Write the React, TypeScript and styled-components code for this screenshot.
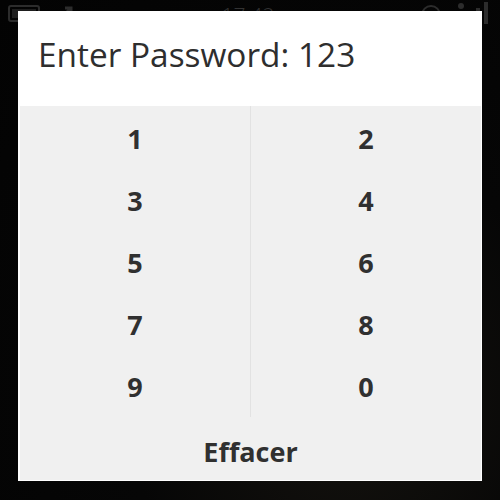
import styled, { createGlobalStyle } from "styled-components";

const GlobalStyle = createGlobalStyle`
  html, body {
    margin: 0;
    padding: 0;
    background: #040404;
  }
  body {
    font-family: "Open Sans", "Liberation Sans", sans-serif;
  }
`;

const Screen = styled.div`
  position: relative;
  width: 500px;
  height: 500px;
  overflow: hidden;
  background: radial-gradient(ellipse at 70% 80%, #15130f 0%, #060606 45%, #030303 100%);
`;

const StatusBar = styled.div`
  height: 26px;
  display: flex;
  align-items: center;
  justify-content: space-between;
  padding: 0 8px;
`;

const Clock = styled.span`
  font-weight: 300;
  font-size: 21px;
  line-height: 1;
  color: #333333;
  margin-top: 4px;
`;

const IconGroup = styled.div`
  display: flex;
  align-items: center;
  gap: 14px;
`;

const Dialog = styled.div`
  position: absolute;
  top: 11px;
  left: 18px;
  width: 464px;
  height: 470px;
  background: #ffffff;
  display: flex;
  flex-direction: column;
`;

const Header = styled.div`
  height: 95px;
  box-sizing: border-box;
  display: flex;
  align-items: center;
  padding: 0 20px 9px;
  font-size: 33.4px;
  color: #2e2e2e;
`;

const Pad = styled.div`
  flex: 1;
  margin: 0 1px 1px 2px;
  background: #f0f0f0;
  display: flex;
  flex-direction: column;
`;

const Keys = styled.div`
  display: grid;
  grid-template-columns: 1fr 1px 1fr;
  padding-top: 1px;
`;

const Column = styled.div`
  display: flex;
  flex-direction: column;
`;

const Divider = styled.div`
  background: #e2e2e2;
  margin-top: -1px;
`;

const Key = styled.div`
  height: 62px;
  display: flex;
  align-items: center;
  justify-content: center;
  font-size: 27px;
  font-weight: 700;
  color: #303030;
`;

const Clear = styled(Key)`
  flex: 1;
  height: auto;
  padding-top: 6px;
`;

const left = ["1", "3", "5", "7", "9"];
const right = ["2", "4", "6", "8", "0"];

export default function App() {
  return (
    <Screen>
      <GlobalStyle />
      <StatusBar>
        <IconGroup>
          <svg width="34" height="20" viewBox="0 0 34 20">
            <rect x="1" y="3" width="30" height="15" rx="2" fill="none" stroke="#2c2c2c" strokeWidth="2" />
            <rect x="4" y="6" width="24" height="9" fill="#1e1e1e" />
          </svg>
          <svg width="20" height="20" viewBox="0 0 20 20">
            <path d="M4 16 L14 6 M9 5 L15 5 L15 11" fill="none" stroke="#2c2c2c" strokeWidth="3" />
          </svg>
        </IconGroup>
        <Clock>17:42</Clock>
        <IconGroup>
          <svg width="22" height="22" viewBox="0 0 22 22">
            <circle cx="11" cy="13" r="9" fill="none" stroke="#2c2c2c" strokeWidth="2" />
          </svg>
          <svg width="36" height="26" viewBox="0 0 36 26">
            <circle cx="5" cy="6" r="3" fill="#2c2c2c" />
            <rect x="3" y="12" width="4" height="12" fill="#2c2c2c" />
            <rect x="12" y="14" width="4" height="10" fill="#2c2c2c" />
            <rect x="20" y="8" width="4" height="16" fill="#2c2c2c" />
            <rect x="28" y="2" width="4" height="22" fill="#2c2c2c" />
          </svg>
        </IconGroup>
      </StatusBar>
      <Dialog>
        <Header>Enter Password: 123</Header>
        <Pad>
          <Keys>
            <Column>
              {left.map((d) => (
                <Key key={d}>{d}</Key>
              ))}
            </Column>
            <Divider />
            <Column>
              {right.map((d) => (
                <Key key={d}>{d}</Key>
              ))}
            </Column>
          </Keys>
          <Clear>Effacer</Clear>
        </Pad>
      </Dialog>
    </Screen>
  );
}
